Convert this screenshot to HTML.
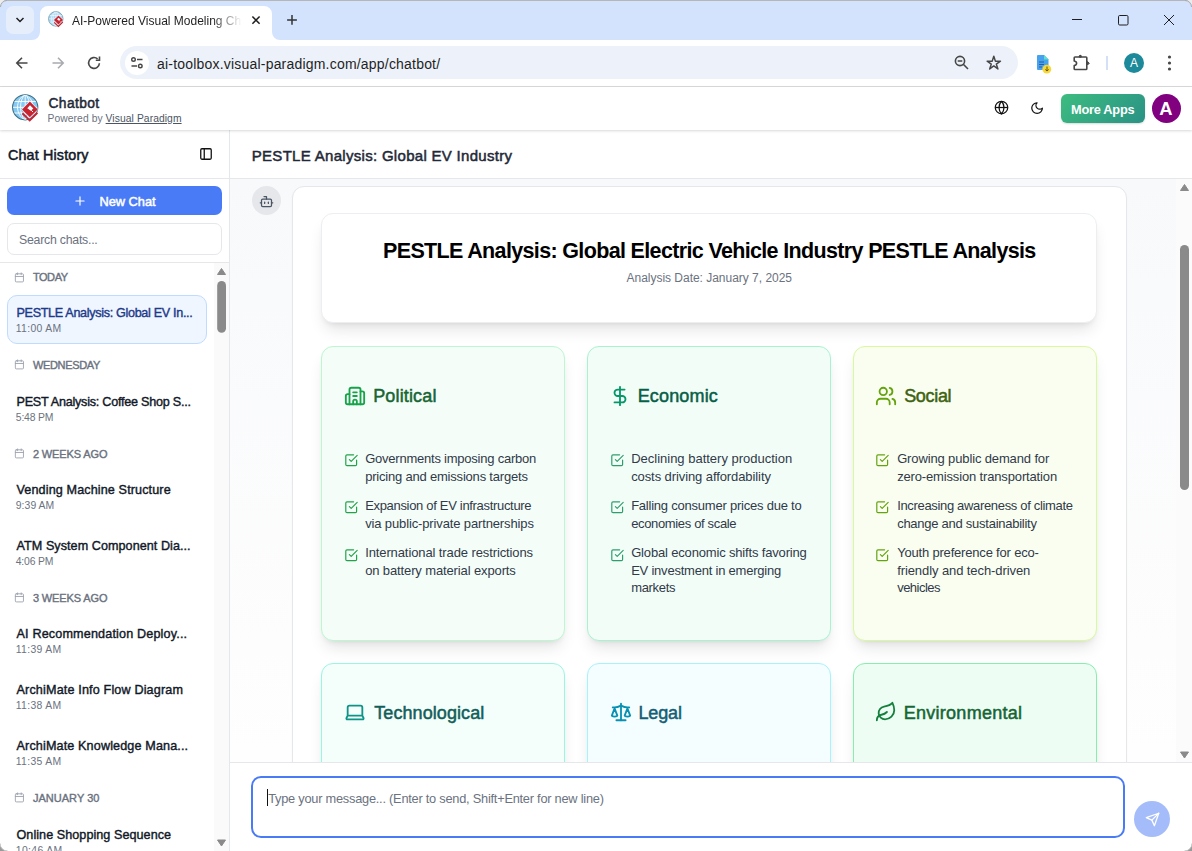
<!DOCTYPE html>
<html><head><meta charset="utf-8">
<style>
*{box-sizing:border-box;margin:0;padding:0}
html,body{width:1192px;height:851px;overflow:hidden;background:#fff;font-family:"Liberation Sans",sans-serif;color:#111827;position:relative}
.a{position:absolute;white-space:nowrap}
svg{position:absolute;overflow:visible}
#tabstrip{position:absolute;left:0;top:0;width:1192px;height:40px;background:#d3e3fd}
#toolbar{position:absolute;left:0;top:40px;width:1192px;height:47px;background:#fff;border-bottom:1px solid #dadbdd}
#omni{position:absolute;left:120px;top:46px;width:898px;height:33px;border-radius:17px;background:#edf2fa}
</style></head>
<body>
<!-- TAB STRIP -->
<div id="tabstrip">
  <div class="a" style="left:0;top:0;width:1192px;height:1px;background:#b6b6b6"></div><svg style="left:0;top:0" width="1192" height="10"><path d="M0 0 H7 A7 7 0 0 0 0 7 Z" fill="#ececec"/><path d="M0.5 7 A6.5 6.5 0 0 1 7 0.5" fill="none" stroke="#a8a8a8" stroke-width="1"/><path d="M1192 0 H1185 A7 7 0 0 1 1192 7 Z" fill="#ececec"/><path d="M1191.5 7 A6.5 6.5 0 0 0 1185 0.5" fill="none" stroke="#a8a8a8" stroke-width="1"/></svg>
  <div class="a" style="left:6px;top:6px;width:28px;height:28px;border-radius:7px;background:#e6eefc"></div>
  <svg style="left:0;top:0" width="1192" height="40">
    <path d="M2 40 H32 A8 8 0 0 0 40 32 V14 A8 8 0 0 1 48 6 H264 A8 8 0 0 1 272 14 V32 A8 8 0 0 0 280 40 Z" fill="#fff"/>
    <path d="M16.5 18 L20 21.5 L23.5 18" fill="none" stroke="#1f1f1f" stroke-width="1.5"/>
    <path d="M252.4 16.5 L259.6 23.7 M259.6 16.5 L252.4 23.7" stroke="#1f1f1f" stroke-width="1.5"/>
    <path d="M292 15 V24.8 M287.1 20 H296.9" stroke="#333" stroke-width="1.5"/>
    <path d="M1072 19.5 H1082" stroke="#1f1f1f" stroke-width="1"/>
    <rect x="1118.5" y="15.5" width="9.5" height="9.5" rx="1.2" fill="none" stroke="#1f1f1f" stroke-width="1"/>
    <path d="M1164 15 L1174 25 M1174 15 L1164 25" stroke="#1f1f1f" stroke-width="1"/>
  </svg>
  <!-- favicon -->
<svg style="left:46.7px;top:10.4px" width="18.5" height="18.5" viewBox="10 92 32 32">
    <defs><clipPath id="gc2"><circle cx="25.2" cy="107.3" r="12.2"/></clipPath></defs>
    <circle cx="25.2" cy="107.3" r="12.6" fill="#a9d9f5" stroke="#5d8595" stroke-width="1.1"/>
    <g clip-path="url(#gc2)" stroke="#fff" stroke-width="0.9" fill="none">
      <path d="M12 107.3 H38 M12 101.5 H38 M12 113 H38 M25.2 94 V120 M25.2 94.7 C19 99 19 115 25.2 120 M25.2 94.7 C31.4 99 31.4 115 25.2 120 M25.2 94.7 C15 99 15 115 25.2 120 M25.2 94.7 C35.4 99 35.4 115 25.2 120"/>
    </g>
    <path d="M29.9 100.8 L38.4 109.4 L29.8 118 L21.3 109.4 Z" fill="#fff"/>
    <path d="M29.9 101.6 L37.8 109.4 L29.8 117.2 L22 109.4 Z" fill="#c8242f"/>
    <path d="M30 105.2 L33.3 108.4 L30.8 110.8 L27.3 108.2 Z" fill="#fff"/>
    <path d="M31.2 110.2 L33 112" stroke="#fff" stroke-width="1"/>
    <path d="M22.4 113.3 L29.7 120.4 L37.4 112.8" fill="none" stroke="#c8242f" stroke-width="1.9"/>
  </svg>
  <div class="a" style="left:72px;top:14px;font-size:12px;line-height:14px;color:#1f1f1f;width:170px;overflow:hidden;-webkit-mask-image:linear-gradient(90deg,#000 140px,transparent 170px)">AI-Powered Visual Modeling Chatbot</div>
</div>
<!-- TOOLBAR -->
<div id="toolbar">
  <svg style="left:0;top:0" width="1192" height="46">
    <path d="M27.5 23 H16.8 M22 17.8 L16.8 23 L22 28.2" fill="none" stroke="#474747" stroke-width="1.6"/>
    <path d="M52.5 23 H63.2 M58 17.8 L63.2 23 L58 28.2" fill="none" stroke="#a8abaf" stroke-width="1.6"/>
    <path d="M97.6 18.9 A5.4 5.4 0 1 0 99.4 23.2" fill="none" stroke="#474747" stroke-width="1.6"/>
    <path d="M99.5 16.5 V20.2 H95.8" fill="none" stroke="#474747" stroke-width="1.6"/>
  </svg>
</div>
<div id="omni"></div>
<div class="a" style="left:125px;top:51px;width:24px;height:24px;border-radius:50%;background:#fff"></div>
<svg style="left:125px;top:51px" width="24" height="24">
  <circle cx="8.5" cy="8.5" r="1.8" fill="none" stroke="#474747" stroke-width="1.4"/>
  <path d="M12 8.5 H17.5 M6.5 15 H12" stroke="#474747" stroke-width="1.4"/>
  <circle cx="15.3" cy="15" r="1.8" fill="none" stroke="#474747" stroke-width="1.4"/>
</svg>
<div class="a" style="left:157px;top:56px;font-size:14px;line-height:16px;color:#1f1f1f;letter-spacing:0.2px">ai-toolbox.visual-paradigm.com/app/chatbot/</div>
<svg style="left:0;top:40px" width="1192" height="46">
  <circle cx="960" cy="21" r="4.6" fill="none" stroke="#474747" stroke-width="1.6"/>
  <path d="M957.7 21 H962.3 M963.3 24.3 L968 29" stroke="#474747" stroke-width="1.6"/>
  <path d="M993.80 16.30 L995.37 21.14 L1000.46 21.14 L996.34 24.13 L997.91 28.96 L993.80 25.97 L989.69 28.96 L991.26 24.13 L987.14 21.14 L992.23 21.14 Z" fill="none" stroke="#474747" stroke-width="1.5" stroke-linejoin="round"/>
  <!-- docs ext -->
  <path d="M1038 15 H1044 L1048.5 19.5 V29 Q1048.5 30 1047.5 30 H1038 Q1037 30 1037 29 V16 Q1037 15 1038 15 Z" fill="#46a2ee"/>
  <path d="M1044 15 L1048.5 19.5 H1044 Z" fill="#5fe0c8"/>
  <path d="M1039 22 H1044 M1039 24.5 H1044 M1039 27 H1042" stroke="#2a5aa0" stroke-width="1"/>
  <circle cx="1046.8" cy="29.2" r="4.4" fill="#f7d83a"/>
  <path d="M1047 26.5 V31 M1045.3 29.5 L1047 31 L1048.7 29.5" fill="none" stroke="#6b5200" stroke-width="1"/>
  <!-- puzzle -->
  <path d="M1075 17 H1086 Q1086.8 17 1086.8 17.8 V28.7 Q1086.8 29.5 1086 29.5 H1075 Q1074.2 29.5 1074.2 28.7 V25.5 Q1076.6 25 1076.6 23.2 Q1076.6 21.5 1074.2 21 V17.8 Q1074.2 17 1075 17 Z" fill="none" stroke="#474747" stroke-width="1.6" stroke-linejoin="round"/><circle cx="1080.3" cy="16.3" r="1.5" fill="#474747"/><path d="M1087.5 21.5 L1089.3 23.2 L1087.5 25 Z" fill="#474747" stroke="#474747" stroke-width="1" stroke-linejoin="round"/>
  <path d="M1107 16 V30" stroke="#c5d6f5" stroke-width="1.5"/>
  <circle cx="1134" cy="23" r="10" fill="#1c8a9a"/>
  <text x="1134" y="27.3" font-size="12" fill="#fff" text-anchor="middle" font-family="Liberation Sans">A</text>
  <circle cx="1169.5" cy="17" r="1.6" fill="#474747"/>
  <circle cx="1169.5" cy="23" r="1.6" fill="#474747"/>
  <circle cx="1169.5" cy="29" r="1.6" fill="#474747"/>
</svg>
<div class="a" style="left:0px;top:87px;width:1192px;height:43px;background:#fff;box-shadow:0 1px 3px rgba(0,0,0,.10),0 1px 2px rgba(0,0,0,.06);z-index:1"></div>
<div class="a" style="left:0;top:87px;width:1192px;height:43px;z-index:2"><svg style="left:10px;top:5px" width="32" height="32" viewBox="10 92 32 32">
    <defs><clipPath id="gc"><circle cx="25.2" cy="107.3" r="12.2"/></clipPath></defs>
    <circle cx="25.2" cy="107.3" r="12.6" fill="#86c9f2" stroke="#3d6f82" stroke-width="1.1"/>
    <g clip-path="url(#gc)" stroke="#fff" stroke-width="0.9" fill="none">
      <path d="M12 107.3 H38 M12 101.5 H38 M12 113 H38 M25.2 94 V120 M25.2 94.7 C19 99 19 115 25.2 120 M25.2 94.7 C31.4 99 31.4 115 25.2 120 M25.2 94.7 C15 99 15 115 25.2 120 M25.2 94.7 C35.4 99 35.4 115 25.2 120"/>
    </g>
    <path d="M29.9 100.8 L38.4 109.4 L29.8 118 L21.3 109.4 Z" fill="#fff"/>
    <path d="M29.9 101.6 L37.8 109.4 L29.8 117.2 L22 109.4 Z" fill="#c8242f"/>
    <path d="M30 105.2 L33.3 108.4 L30.8 110.8 L27.3 108.2 Z" fill="#fff"/>
    <path d="M31.2 110.2 L33 112" stroke="#fff" stroke-width="1"/>
    <path d="M22.4 113.3 L29.7 120.4 L37.4 112.8" fill="none" stroke="#c8242f" stroke-width="1.9"/>
  </svg>
  <svg style="left:994px;top:13.4px" width="15" height="15" viewBox="0 0 24 24" fill="none" stroke="#111" stroke-width="2">
    <circle cx="12" cy="12" r="10"/><path d="M12 2a14.5 14.5 0 0 0 0 20 14.5 14.5 0 0 0 0-20"/><path d="M2 12h20"/>
  </svg>
  <svg style="left:1030.2px;top:13.8px" width="14.2" height="14.2" viewBox="0 0 24 24" fill="none" stroke="#111" stroke-width="2.1" stroke-linejoin="round">
    <path d="M12 3a6 6 0 0 0 9 9 9 9 0 1 1-9-9Z"/>
  </svg>
  <div class="a" style="left:1061px;top:7px;width:84px;height:29px;border-radius:6px;background:linear-gradient(135deg,#3dbc80,#2a9285);box-shadow:0 1px 2px rgba(0,0,0,.15)"></div>
  <div class="a" style="left:1152px;top:7px;width:29px;height:29px;border-radius:50%;background:#800080"></div>
</div>
<div id="t0" class="a" style="left:48.50px;top:95.01px;font-size:13.8px;line-height:17px;-webkit-text-stroke:0.5px currentColor;color:#1f2937;letter-spacing:0.373px;z-index:3;">Chatbot</div>
<div id="t1" class="a" style="left:47.50px;top:112.01px;font-size:10.3px;line-height:13px;color:#6b7280;letter-spacing:0.079px;z-index:3;">Powered by <span style="text-decoration:underline;color:#4b5563">Visual Paradigm</span></div>
<div id="t2" class="a" style="left:1071.00px;top:102.01px;font-size:12.8px;line-height:16px;font-weight:bold;color:#fff;letter-spacing:-0.261px;z-index:3;">More Apps</div>
<div id="t3" class="a" style="left:1159.20px;top:97.00px;font-size:18.4px;line-height:23px;font-weight:bold;color:#fff;z-index:3;">A</div>
<div class="a" style="left:0px;top:130px;width:229px;height:721px;background:#fff"></div>
<div class="a" style="left:229px;top:130px;width:1px;height:721px;background:#e5e7eb"></div>
<div id="t4" class="a" style="left:8.00px;top:146.00px;font-size:14.3px;line-height:18px;-webkit-text-stroke:0.5px currentColor;color:#111827;letter-spacing:0.167px;">Chat History</div>
<svg style="left:199px;top:147px" width="14" height="14" viewBox="0 0 24 24" fill="none" stroke="#111" stroke-width="2.2" stroke-linecap="round" stroke-linejoin="round"><rect width="18" height="18" x="3" y="3" rx="2"/><path d="M9 3v18"/></svg>
<div class="a" style="left:0px;top:178px;width:229px;height:1px;background:#e5e7eb"></div>
<div class="a" style="left:7px;top:186px;width:215px;height:29px;border-radius:7px;background:#4a7bf7"></div>
<svg style="left:73px;top:194px" width="14" height="14" viewBox="0 0 24 24" fill="none" stroke="#fff" stroke-width="2" stroke-linecap="round"><path d="M5 12h14"/><path d="M12 5v14"/></svg>
<div id="t5" class="a" style="left:99.50px;top:194.00px;font-size:12.8px;line-height:16px;-webkit-text-stroke:0.5px currentColor;color:#fff;letter-spacing:-0.012px;">New Chat</div>
<div class="a" style="left:7px;top:222.5px;width:215px;height:32px;border-radius:7px;border:1px solid #e5e7eb;background:#fff"></div>
<div id="t6" class="a" style="left:19.00px;top:233.01px;font-size:12.3px;line-height:15px;color:#6b7280;letter-spacing:-0.231px;">Search chats...</div>
<div class="a" style="left:0px;top:262px;width:229px;height:1px;background:#e5e7eb"></div>
<div class="a" style="left:214px;top:263px;width:15px;height:588px;background:#fafafa"></div>
<svg style="left:0;top:0" width="229" height="851">
    <path d="M217.5 274.5 L221.5 268.5 L225.5 274.5 Z" fill="#8a8a8a" stroke="#8a8a8a" stroke-width="1" stroke-linejoin="round"/>
    <rect x="217.2" y="281" width="8.8" height="51.7" rx="4.4" fill="#8a8a8a"/>
    <path d="M217.5 840 L221.5 846 L225.5 840 Z" fill="#8a8a8a" stroke="#8a8a8a" stroke-width="1" stroke-linejoin="round"/>
  </svg>
<div class="a" style="left:7px;top:295px;width:200px;height:48.5px;border-radius:10px;border:1px solid #bfdbfe;background:#eff6ff"></div>
<svg style="left:14.3px;top:271.5px" width="10.8" height="10.8" viewBox="0 0 24 24" fill="none" stroke="#9ca3af" stroke-width="2" stroke-linecap="round" stroke-linejoin="round" ><rect width="18" height="18" x="3" y="4" rx="2"/><path d="M16 2v4"/><path d="M8 2v4"/><path d="M3 10h18"/></svg>
<div id="t7" class="a" style="left:32.90px;top:270.01px;font-size:11px;line-height:14px;-webkit-text-stroke:0.4px currentColor;color:#6b7280;letter-spacing:-0.428px;">TODAY</div>
<div id="t8" class="a" style="left:16.52px;top:305.01px;font-size:12.6px;line-height:16px;-webkit-text-stroke:0.4px currentColor;color:#1e3a8a;letter-spacing:-0.322px;">PESTLE Analysis: Global EV In...</div>
<div id="t9" class="a" style="left:15.77px;top:322.01px;font-size:10.4px;line-height:13px;color:#6b7280;letter-spacing:0.325px;">11:00 AM</div>
<svg style="left:14.3px;top:359.20000000000005px" width="10.8" height="10.8" viewBox="0 0 24 24" fill="none" stroke="#9ca3af" stroke-width="2" stroke-linecap="round" stroke-linejoin="round" ><rect width="18" height="18" x="3" y="4" rx="2"/><path d="M16 2v4"/><path d="M8 2v4"/><path d="M3 10h18"/></svg>
<div id="t10" class="a" style="left:32.90px;top:358.01px;font-size:11px;line-height:14px;-webkit-text-stroke:0.4px currentColor;color:#6b7280;letter-spacing:-0.338px;">WEDNESDAY</div>
<div id="t11" class="a" style="left:16.52px;top:394.01px;font-size:12.6px;line-height:16px;-webkit-text-stroke:0.4px currentColor;color:#111827;letter-spacing:-0.238px;">PEST Analysis: Coffee Shop S...</div>
<div id="t12" class="a" style="left:15.77px;top:411.00px;font-size:10.4px;line-height:13px;color:#6b7280;letter-spacing:-0.163px;">5:48 PM</div>
<svg style="left:14.3px;top:448.20000000000005px" width="10.8" height="10.8" viewBox="0 0 24 24" fill="none" stroke="#9ca3af" stroke-width="2" stroke-linecap="round" stroke-linejoin="round" ><rect width="18" height="18" x="3" y="4" rx="2"/><path d="M16 2v4"/><path d="M8 2v4"/><path d="M3 10h18"/></svg>
<div id="t13" class="a" style="left:32.90px;top:447.01px;font-size:11px;line-height:14px;-webkit-text-stroke:0.4px currentColor;color:#6b7280;letter-spacing:-0.112px;">2 WEEKS AGO</div>
<div id="t14" class="a" style="left:16.52px;top:482.00px;font-size:12.6px;line-height:16px;-webkit-text-stroke:0.4px currentColor;color:#111827;letter-spacing:0.123px;">Vending Machine Structure</div>
<div id="t15" class="a" style="left:15.77px;top:499.00px;font-size:10.4px;line-height:13px;color:#6b7280;letter-spacing:0.062px;">9:39 AM</div>
<div id="t16" class="a" style="left:16.52px;top:538.01px;font-size:12.6px;line-height:16px;-webkit-text-stroke:0.4px currentColor;color:#111827;letter-spacing:0.055px;">ATM System Component Dia...</div>
<div id="t17" class="a" style="left:15.77px;top:555.01px;font-size:10.4px;line-height:13px;color:#6b7280;letter-spacing:-0.177px;">4:06 PM</div>
<svg style="left:14.3px;top:592.1px" width="10.8" height="10.8" viewBox="0 0 24 24" fill="none" stroke="#9ca3af" stroke-width="2" stroke-linecap="round" stroke-linejoin="round" ><rect width="18" height="18" x="3" y="4" rx="2"/><path d="M16 2v4"/><path d="M8 2v4"/><path d="M3 10h18"/></svg>
<div id="t18" class="a" style="left:32.90px;top:591.00px;font-size:11px;line-height:14px;-webkit-text-stroke:0.4px currentColor;color:#6b7280;letter-spacing:-0.112px;">3 WEEKS AGO</div>
<div id="t19" class="a" style="left:16.52px;top:626.01px;font-size:12.6px;line-height:16px;-webkit-text-stroke:0.4px currentColor;color:#111827;letter-spacing:0.160px;">AI Recommendation Deploy...</div>
<div id="t20" class="a" style="left:15.77px;top:643.00px;font-size:10.4px;line-height:13px;color:#6b7280;letter-spacing:0.326px;">11:39 AM</div>
<div id="t21" class="a" style="left:16.52px;top:682.01px;font-size:12.6px;line-height:16px;-webkit-text-stroke:0.4px currentColor;color:#111827;letter-spacing:0.155px;">ArchiMate Info Flow Diagram</div>
<div id="t22" class="a" style="left:15.77px;top:699.01px;font-size:10.4px;line-height:13px;color:#6b7280;letter-spacing:0.326px;">11:38 AM</div>
<div id="t23" class="a" style="left:16.52px;top:738.01px;font-size:12.6px;line-height:16px;-webkit-text-stroke:0.4px currentColor;color:#111827;letter-spacing:0.138px;">ArchiMate Knowledge Mana...</div>
<div id="t24" class="a" style="left:15.77px;top:755.00px;font-size:10.4px;line-height:13px;color:#6b7280;letter-spacing:0.326px;">11:35 AM</div>
<svg style="left:14.3px;top:792.2px" width="10.8" height="10.8" viewBox="0 0 24 24" fill="none" stroke="#9ca3af" stroke-width="2" stroke-linecap="round" stroke-linejoin="round" ><rect width="18" height="18" x="3" y="4" rx="2"/><path d="M16 2v4"/><path d="M8 2v4"/><path d="M3 10h18"/></svg>
<div id="t25" class="a" style="left:32.90px;top:791.01px;font-size:11px;line-height:14px;-webkit-text-stroke:0.4px currentColor;color:#6b7280;letter-spacing:0.032px;">JANUARY 30</div>
<div id="t26" class="a" style="left:16.52px;top:827.01px;font-size:12.6px;line-height:16px;-webkit-text-stroke:0.4px currentColor;color:#111827;letter-spacing:0.052px;">Online Shopping Sequence</div>
<div id="t27" class="a" style="left:15.77px;top:844.01px;font-size:10.4px;line-height:13px;color:#6b7280;letter-spacing:0.354px;">10:46 AM</div>
<div class="a" style="left:230px;top:130px;width:962px;height:48px;background:#fff"></div>
<div id="t28" class="a" style="left:251.75px;top:146.00px;font-size:15px;line-height:19px;-webkit-text-stroke:0.5px currentColor;color:#1f2937;letter-spacing:0.299px;">PESTLE Analysis: Global EV Industry</div>
<div class="a" style="left:230px;top:178px;width:962px;height:1px;background:#e5e7eb"></div>
<div class="a" style="left:230px;top:179px;width:962px;height:583px;background:linear-gradient(180deg,#f8f9fb,#fefefe);overflow:hidden"></div>
<div class="a" style="left:230px;top:179px;width:946px;height:583px;overflow:hidden">
<div class="a" style="left:22px;top:7px;width:29px;height:29px;border-radius:50%;background:#e5e7eb"></div>
<svg style="left:28.9px;top:15.100000000000001px" width="15" height="15" viewBox="0 0 24 24" fill="none" stroke="#4b5563" stroke-width="2" stroke-linecap="round" stroke-linejoin="round" ><path d="M12 8V4H8"/><rect width="16" height="12" x="4" y="8" rx="2"/><path d="M2 14h2"/><path d="M20 14h2"/><path d="M15 13v2"/><path d="M9 13v2"/></svg>
<div class="a" style="left:62px;top:7px;width:835px;height:700px;border-radius:12px;border:1px solid #e5e7eb;background:#fff;box-shadow:0 1px 2px rgba(0,0,0,.04)"></div>
<div class="a" style="left:91px;top:34px;width:776px;height:110px;border-radius:12px;border:1px solid #eceef1;background:#fff;box-shadow:0 10px 15px -3px rgba(0,0,0,.1),0 4px 6px -4px rgba(0,0,0,.1)"></div>
</div>
<div class="a" style="left:230px;top:179px;width:946px;height:583px;overflow:hidden">
<div class="a" style="left:91px;top:167px;width:244px;height:295px;border-radius:12px;border:1px solid #bbf7d0;background:#f5fdf8;box-shadow:0 10px 15px -3px rgba(0,0,0,.1),0 4px 6px -4px rgba(0,0,0,.1)"></div>
<svg style="left:113.9px;top:205.8px" width="22" height="22" viewBox="0 0 24 24" fill="none" stroke="#16a34a" stroke-width="2" stroke-linecap="round" stroke-linejoin="round" ><path d="M10 12h4"/><path d="M10 8h4"/><path d="M14 21v-3a2 2 0 0 0-4 0v3"/><path d="M6 10H4a2 2 0 0 0-2 2v7a2 2 0 0 0 2 2h16a2 2 0 0 0 2-2V9a2 2 0 0 0-2-2h-2"/><path d="M6 21V5a2 2 0 0 1 2-2h8a2 2 0 0 1 2 2v16"/></svg>
<div class="a" style="left:357px;top:167px;width:244px;height:295px;border-radius:12px;border:1px solid #a7f3d0;background:#f3fdf8;box-shadow:0 10px 15px -3px rgba(0,0,0,.1),0 4px 6px -4px rgba(0,0,0,.1)"></div>
<svg style="left:379.25px;top:205.8px" width="22" height="22" viewBox="0 0 24 24" fill="none" stroke="#059669" stroke-width="2" stroke-linecap="round" stroke-linejoin="round" ><path d="M12 2v20"/><path d="M17 5H9.5a3.5 3.5 0 0 0 0 7h5a3.5 3.5 0 0 1 0 7H6"/></svg>
<div class="a" style="left:623px;top:167px;width:244px;height:295px;border-radius:12px;border:1px solid #d9f99d;background:#fafef1;box-shadow:0 10px 15px -3px rgba(0,0,0,.1),0 4px 6px -4px rgba(0,0,0,.1)"></div>
<svg style="left:644.75px;top:205.8px" width="22" height="22" viewBox="0 0 24 24" fill="none" stroke="#65a30d" stroke-width="2" stroke-linecap="round" stroke-linejoin="round" ><path d="M16 21v-2a4 4 0 0 0-4-4H6a4 4 0 0 0-4 4v2"/><circle cx="9" cy="7" r="4"/><path d="M22 21v-2a4 4 0 0 0-3-3.87"/><path d="M16 3.13a4 4 0 0 1 0 7.75"/></svg>
<div class="a" style="left:91px;top:484px;width:244px;height:295px;border-radius:12px;border:1px solid #99f6e4;background:#f4fefb;box-shadow:0 10px 15px -3px rgba(0,0,0,.1),0 4px 6px -4px rgba(0,0,0,.1)"></div>
<svg style="left:113.8px;top:521.9px" width="22" height="22" viewBox="0 0 24 24" fill="none" stroke="#0d9488" stroke-width="2" stroke-linecap="round" stroke-linejoin="round" ><path d="M20 16V7a2 2 0 0 0-2-2H6a2 2 0 0 0-2 2v9m16 0H4m16 0 1.28 2.55a1 1 0 0 1-.9 1.45H3.62a1 1 0 0 1-.9-1.45L4 16"/></svg>
<div class="a" style="left:357px;top:484px;width:244px;height:295px;border-radius:12px;border:1px solid #a5f3fc;background:#f4fdff;box-shadow:0 10px 15px -3px rgba(0,0,0,.1),0 4px 6px -4px rgba(0,0,0,.1)"></div>
<svg style="left:379.5px;top:521.75px" width="22" height="22" viewBox="0 0 24 24" fill="none" stroke="#0891b2" stroke-width="2" stroke-linecap="round" stroke-linejoin="round" ><path d="m16 16 3-8 3 8c-.87.65-1.92 1-3 1s-2.13-.35-3-1Z"/><path d="m2 16 3-8 3 8c-.87.65-1.92 1-3 1s-2.13-.35-3-1Z"/><path d="M7 21h10"/><path d="M12 3v18"/><path d="M3 7h2c2 0 5-1 7-2 2 1 5 2 7 2h2"/></svg>
<div class="a" style="left:623px;top:484px;width:244px;height:295px;border-radius:12px;border:1px solid #86efac;background:#edfdf3;box-shadow:0 10px 15px -3px rgba(0,0,0,.1),0 4px 6px -4px rgba(0,0,0,.1)"></div>
<svg style="left:644.75px;top:521.7px" width="22" height="22" viewBox="0 0 24 24" fill="none" stroke="#15803d" stroke-width="2" stroke-linecap="round" stroke-linejoin="round" ><path d="M11 20A7 7 0 0 1 9.8 6.1C15.5 5 17 4.48 19 2c1 2 2 4.18 2 8 0 5.5-4.78 10-10 10Z"/><path d="M2 21c0-3 1.85-5.36 5.08-6C9.5 14.52 12 13 13 12"/></svg>
</div>
<div id="t29" class="a" style="left:383.00px;top:238.01px;font-size:21.5px;line-height:27px;font-weight:bold;color:#000;letter-spacing:-0.652px;">PESTLE Analysis: Global Electric Vehicle Industry PESTLE Analysis</div>
<div id="t30" class="a" style="left:626.50px;top:271.00px;font-size:12px;line-height:15px;color:#6b7280;letter-spacing:-0.020px;">Analysis Date: January 7, 2025</div>
<div id="t31" class="a" style="left:373.20px;top:385.00px;font-size:18px;line-height:22px;-webkit-text-stroke:0.5px currentColor;color:#166534;letter-spacing:0.148px;">Political</div>
<div id="t32" class="a" style="left:637.70px;top:385.00px;font-size:18px;line-height:22px;-webkit-text-stroke:0.5px currentColor;color:#065f46;letter-spacing:0.157px;">Economic</div>
<div id="t33" class="a" style="left:904.20px;top:385.00px;font-size:18px;line-height:22px;-webkit-text-stroke:0.5px currentColor;color:#3f6212;letter-spacing:-0.322px;">Social</div>
<div id="t34" class="a" style="left:374.30px;top:702.01px;font-size:18px;line-height:22px;-webkit-text-stroke:0.5px currentColor;color:#115e59;letter-spacing:0.075px;">Technological</div>
<div id="t35" class="a" style="left:638.50px;top:702.01px;font-size:18px;line-height:22px;-webkit-text-stroke:0.5px currentColor;color:#155e75;letter-spacing:-0.160px;">Legal</div>
<div id="t36" class="a" style="left:903.70px;top:701.51px;font-size:18px;line-height:22px;-webkit-text-stroke:0.5px currentColor;color:#166534;letter-spacing:0.277px;">Environmental</div>
<svg style="left:343.9px;top:452.7px" width="14.4" height="14.4" viewBox="0 0 24 24" fill="none" stroke="#22a34a" stroke-width="2" stroke-linecap="round" stroke-linejoin="round" ><polyline points="9 11 12 14 22 4"/><path d="M21 12v7a2 2 0 0 1-2 2H5a2 2 0 0 1-2-2V5a2 2 0 0 1 2-2h11"/></svg>
<div id="t37" class="a" style="left:365.15px;top:451.00px;font-size:13px;line-height:16px;color:#303a48;letter-spacing:-0.227px;">Governments imposing carbon</div>
<div id="t38" class="a" style="left:365.15px;top:469.00px;font-size:13px;line-height:16px;color:#303a48;letter-spacing:-0.200px;">pricing and emissions targets</div>
<svg style="left:343.9px;top:500.40000000000003px" width="14.4" height="14.4" viewBox="0 0 24 24" fill="none" stroke="#22a34a" stroke-width="2" stroke-linecap="round" stroke-linejoin="round" ><polyline points="9 11 12 14 22 4"/><path d="M21 12v7a2 2 0 0 1-2 2H5a2 2 0 0 1-2-2V5a2 2 0 0 1 2-2h11"/></svg>
<div id="t39" class="a" style="left:365.15px;top:498.00px;font-size:13px;line-height:16px;color:#303a48;letter-spacing:-0.316px;">Expansion of EV infrastructure</div>
<div id="t40" class="a" style="left:365.15px;top:516.01px;font-size:13px;line-height:16px;color:#303a48;letter-spacing:-0.132px;">via public-private partnerships</div>
<svg style="left:343.9px;top:547.7px" width="14.4" height="14.4" viewBox="0 0 24 24" fill="none" stroke="#22a34a" stroke-width="2" stroke-linecap="round" stroke-linejoin="round" ><polyline points="9 11 12 14 22 4"/><path d="M21 12v7a2 2 0 0 1-2 2H5a2 2 0 0 1-2-2V5a2 2 0 0 1 2-2h11"/></svg>
<div id="t41" class="a" style="left:365.15px;top:545.00px;font-size:13px;line-height:16px;color:#303a48;letter-spacing:-0.106px;">International trade restrictions</div>
<div id="t42" class="a" style="left:365.15px;top:563.01px;font-size:13px;line-height:16px;color:#303a48;letter-spacing:-0.123px;">on battery material exports</div>
<svg style="left:610.4px;top:452.7px" width="14.4" height="14.4" viewBox="0 0 24 24" fill="none" stroke="#2f9e6e" stroke-width="2" stroke-linecap="round" stroke-linejoin="round" ><polyline points="9 11 12 14 22 4"/><path d="M21 12v7a2 2 0 0 1-2 2H5a2 2 0 0 1-2-2V5a2 2 0 0 1 2-2h11"/></svg>
<div id="t43" class="a" style="left:631.15px;top:451.00px;font-size:13px;line-height:16px;color:#303a48;letter-spacing:-0.003px;">Declining battery production</div>
<div id="t44" class="a" style="left:631.15px;top:469.00px;font-size:13px;line-height:16px;color:#303a48;letter-spacing:-0.089px;">costs driving affordability</div>
<svg style="left:610.4px;top:500.40000000000003px" width="14.4" height="14.4" viewBox="0 0 24 24" fill="none" stroke="#2f9e6e" stroke-width="2" stroke-linecap="round" stroke-linejoin="round" ><polyline points="9 11 12 14 22 4"/><path d="M21 12v7a2 2 0 0 1-2 2H5a2 2 0 0 1-2-2V5a2 2 0 0 1 2-2h11"/></svg>
<div id="t45" class="a" style="left:631.15px;top:498.00px;font-size:13px;line-height:16px;color:#303a48;letter-spacing:-0.224px;">Falling consumer prices due to</div>
<div id="t46" class="a" style="left:631.15px;top:516.01px;font-size:13px;line-height:16px;color:#303a48;letter-spacing:-0.345px;">economies of scale</div>
<svg style="left:610.4px;top:547.7px" width="14.4" height="14.4" viewBox="0 0 24 24" fill="none" stroke="#2f9e6e" stroke-width="2" stroke-linecap="round" stroke-linejoin="round" ><polyline points="9 11 12 14 22 4"/><path d="M21 12v7a2 2 0 0 1-2 2H5a2 2 0 0 1-2-2V5a2 2 0 0 1 2-2h11"/></svg>
<div id="t47" class="a" style="left:631.15px;top:545.00px;font-size:13px;line-height:16px;color:#303a48;letter-spacing:-0.165px;">Global economic shifts favoring</div>
<div id="t48" class="a" style="left:631.15px;top:563.01px;font-size:13px;line-height:16px;color:#303a48;letter-spacing:-0.219px;">EV investment in emerging</div>
<div id="t49" class="a" style="left:631.15px;top:580.00px;font-size:13px;line-height:16px;color:#303a48;letter-spacing:-0.306px;">markets</div>
<svg style="left:875.1px;top:452.7px" width="14.4" height="14.4" viewBox="0 0 24 24" fill="none" stroke="#65a30d" stroke-width="2" stroke-linecap="round" stroke-linejoin="round" ><polyline points="9 11 12 14 22 4"/><path d="M21 12v7a2 2 0 0 1-2 2H5a2 2 0 0 1-2-2V5a2 2 0 0 1 2-2h11"/></svg>
<div id="t50" class="a" style="left:897.15px;top:451.00px;font-size:13px;line-height:16px;color:#303a48;letter-spacing:-0.134px;">Growing public demand for</div>
<div id="t51" class="a" style="left:897.15px;top:469.00px;font-size:13px;line-height:16px;color:#303a48;letter-spacing:-0.150px;">zero-emission transportation</div>
<svg style="left:875.1px;top:500.40000000000003px" width="14.4" height="14.4" viewBox="0 0 24 24" fill="none" stroke="#65a30d" stroke-width="2" stroke-linecap="round" stroke-linejoin="round" ><polyline points="9 11 12 14 22 4"/><path d="M21 12v7a2 2 0 0 1-2 2H5a2 2 0 0 1-2-2V5a2 2 0 0 1 2-2h11"/></svg>
<div id="t52" class="a" style="left:897.15px;top:498.00px;font-size:13px;line-height:16px;color:#303a48;letter-spacing:-0.331px;">Increasing awareness of climate</div>
<div id="t53" class="a" style="left:897.15px;top:516.01px;font-size:13px;line-height:16px;color:#303a48;letter-spacing:-0.258px;">change and sustainability</div>
<svg style="left:875.1px;top:547.7px" width="14.4" height="14.4" viewBox="0 0 24 24" fill="none" stroke="#65a30d" stroke-width="2" stroke-linecap="round" stroke-linejoin="round" ><polyline points="9 11 12 14 22 4"/><path d="M21 12v7a2 2 0 0 1-2 2H5a2 2 0 0 1-2-2V5a2 2 0 0 1 2-2h11"/></svg>
<div id="t54" class="a" style="left:897.15px;top:545.00px;font-size:13px;line-height:16px;color:#303a48;letter-spacing:-0.187px;">Youth preference for eco-</div>
<div id="t55" class="a" style="left:897.15px;top:563.01px;font-size:13px;line-height:16px;color:#303a48;letter-spacing:-0.087px;">friendly and tech-driven</div>
<div id="t56" class="a" style="left:897.15px;top:580.00px;font-size:13px;line-height:16px;color:#303a48;letter-spacing:-0.502px;">vehicles</div>
<div class="a" style="left:1176px;top:179px;width:16px;height:583px;background:#fbfbfb"></div>
<svg style="left:0;top:0" width="1192" height="851">
    <path d="M1180.5 190.5 L1184.5 184.5 L1188.5 190.5 Z" fill="#8a8a8a" stroke="#8a8a8a" stroke-width="1" stroke-linejoin="round"/>
    <rect x="1180" y="245" width="9" height="245" rx="4.5" fill="#8a8a8a"/>
    <path d="M1180.5 752 L1184.5 758 L1188.5 752 Z" fill="#8a8a8a" stroke="#8a8a8a" stroke-width="1" stroke-linejoin="round"/>
  </svg>
<div class="a" style="left:230px;top:762px;width:962px;height:89px;background:#fff;border-top:1px solid #e5e7eb"></div>
<div class="a" style="left:251px;top:776px;width:874px;height:61.5px;border-radius:10px;border:2px solid #4a7bf7;background:#fff"></div>
<div class="a" style="left:267px;top:789px;width:1px;height:17px;background:#111"></div>
<div id="t57" class="a" style="left:268.20px;top:791.01px;font-size:12.8px;line-height:16px;color:#6b7280;letter-spacing:-0.239px;">Type your message... (Enter to send, Shift+Enter for new line)</div>
<div class="a" style="left:1134px;top:801px;width:36px;height:36px;border-radius:50%;background:#a5bcfb"></div>
<svg style="left:1144.5px;top:811.5px" width="15" height="15" viewBox="0 0 24 24" fill="none" stroke="#fff" stroke-width="2" stroke-linecap="round" stroke-linejoin="round" ><path d="m22 2-7 20-4-9-9-4Z"/><path d="M22 2 11 13"/></svg>
<svg style="left:0;top:0;z-index:9" width="1192" height="851"><path d="M0 843 A8 8 0 0 0 8 851 H0 Z" fill="#9a9a9a"/><path d="M0 843.5 A7.5 7.5 0 0 0 7.5 851" fill="none" stroke="#c8c8c8" stroke-width="1"/><path d="M1192 843 A8 8 0 0 1 1184 851 H1192 Z" fill="#9a9a9a"/><path d="M1192 843.5 A7.5 7.5 0 0 1 1184.5 851" fill="none" stroke="#c8c8c8" stroke-width="1"/></svg>
</body></html>
